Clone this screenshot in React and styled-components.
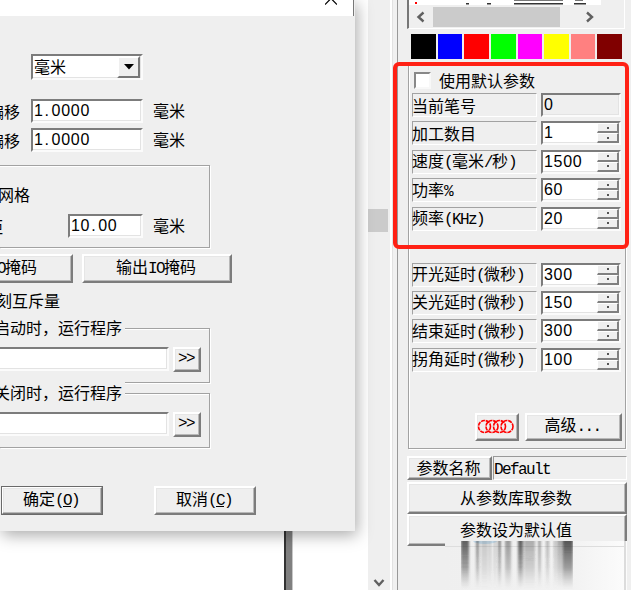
import React from "react";
import styled, { createGlobalStyle } from "styled-components";

const GlobalStyle = createGlobalStyle`
  * { box-sizing: border-box; }
  body {
    margin: 0;
    overflow: hidden;
    background: #fff;
    color: #000;
    font: 16px/16px "Noto Sans CJK SC", sans-serif;
  }
`;

const Screen = styled.div`
  position: relative;
  display: flex;
  width: 631px;
  height: 590px;
  overflow: hidden;
  white-space: nowrap;
`;

/* text pieces */
const Latin = styled.span`
  font-family: "Liberation Mono", monospace;
  font-size: 16px;
  letter-spacing: -1.6px;
`;

const Digits = styled.span`
  font-family: "Liberation Sans Narrow", "Liberation Sans", sans-serif;
  font-size: 16px;
  letter-spacing: 0.7px;
`;

const Dot = styled.span`
  display: inline-block;
  width: 8px;
  padding-left: 1px;
`;

const Text = ({ children }) =>
  children.split(/([\x20-\x7e]+)/).map((part, i) => (i % 2 ? <Latin key={i}>{part}</Latin> : part));

const Value = ({ children }) => (
  <Digits>
    {children.split(/(\.)/).map((part, i) => (part === "." ? <Dot key={i}>.</Dot> : part))}
  </Digits>
);

/* shared win32 parts */
const Field = styled.div`
  display: flex;
  align-items: center;
  flex: none;
  width: ${(p) => p.$w}px;
  height: ${(p) => p.$h || 24}px;
  padding-left: 1px;
  padding-bottom: ${(p) => p.$lift || 0}px;
  background: ${(p) => (p.$off ? "#efefef" : "#fff")};
  border: 2px solid;
  border-color: #7c7c7c #fbfbfb #fbfbfb #7c7c7c;
  border-left-width: ${(p) => (p.$open ? 0 : 2)}px;
  box-shadow: inset -1px -1px #e3e3e3;
`;

const Button = styled.div`
  display: flex;
  align-items: center;
  justify-content: center;
  flex: none;
  width: ${(p) => p.$w}px;
  height: ${(p) => p.$h || 29}px;
  padding: 0 2px 2px 0;
  background: #efefef;
  border: 2px solid;
  border-color: #fff #7c7c7c #7c7c7c #fff;
  box-shadow: inset -1px -1px #b8b8b8, inset 1px 1px #e6e6e6;
  outline: ${(p) => (p.$main ? "1px solid #6a6a6a" : "none")};
  outline-offset: -1px;
`;

/* drawing area behind the dialog */
const Canvas = styled.div`
  display: flex;
  align-items: flex-end;
  width: 368px;
  padding-left: 284px;
`;

const PageEdge = styled.div`
  width: 9px;
  height: 70px;
  background: #808080;
  border-left: 2px solid #333;
  border-right: 1px solid #c8c8c8;
`;

const Track = styled.div`
  display: flex;
  flex-direction: column;
  justify-content: space-between;
  align-items: center;
  width: 22px;
  padding: 209px 0 2px;
  background: #efefef;
`;

const Thumb = styled.div`
  width: 20px;
  height: 23px;
  margin-right: 2px;
  background: #cbcbcb;
`;

const Divider = styled.div`
  width: 8px;
  background: #f1f1f1;
  border-left: 2px solid #fff;
  border-right: 1px solid #999;
  box-shadow: inset 1px 0 #e2e2e2;
`;

/* dialog */
const Dialog = styled.div`
  position: absolute;
  left: 0;
  top: 0;
  width: 355px;
  height: 531px;
  background: #efefef;
  box-shadow: 2px 4px 15px rgba(0, 0, 0, 0.34);
  clip-path: inset(0 -35px -40px 0);
`;

const TitleBar = styled.div`
  height: 16px;
  width: 354px;
  padding-left: 325px;
  background: #fff;
  border-right: 1px solid #777;
  svg { display: block; }
`;

const Line = styled.div`
  display: flex;
  align-items: center;
  height: ${(p) => p.$h || 24}px;
  margin-top: ${(p) => p.$mt || 0}px;
  padding-left: ${(p) => p.$pl || 0}px;
`;

const Cut = styled.div`
  display: flex;
  flex: none;
  justify-content: flex-end;
  width: ${(p) => p.$w}px;
  margin-right: ${(p) => p.$gap || 0}px;
  padding-bottom: ${(p) => p.$lift || 0}px;
  overflow: hidden;
  line-height: 22px;
`;

const Unit = styled.span`
  margin-left: 10px;
  padding-bottom: 2px;
`;

const DropButton = styled.div`
  display: flex;
  align-items: center;
  justify-content: center;
  width: 23px;
  height: 22px;
  margin: 0 1px -2px auto;
  background: #efefef;
  border: 2px solid;
  border-color: #fff #777 #777 #fff;
`;

const Group = styled.div`
  width: 210px;
  height: ${(p) => p.$h}px;
  margin-top: ${(p) => p.$mt}px;
  border: 1px solid #a2a2a2;
  border-left: 0;
  box-shadow: 1px 1px #fff, inset 0 1px #fff;
`;

const Legend = styled.div`
  display: flex;
  justify-content: flex-end;
  width: 125px;
  height: 20px;
  margin-top: -12px;
  padding-right: 3px;
  line-height: 20px;
  overflow: hidden;
  background: #efefef;
`;

const PathRow = styled.div`
  display: flex;
  gap: 4px;
  margin-top: 10px;
`;

const Actions = styled.div`
  display: flex;
  gap: 51px;
  margin-top: 38px;
  padding-left: 1px;
`;

/* parameter panel */
const Panel = styled.div`
  flex: 1;
  padding-left: 9px;
  background: #efefef;
`;

const ListBottom = styled.div`
  display: flex;
  flex-direction: column;
  width: 218px;
  height: 29px;
  background: #efefef;
  border-left: 2px solid #777;
  border-bottom: 1px solid #fff;
  border-right: 1px solid #fff;
  svg { display: block; flex: none; }
`;

const HScroll = styled.div`
  display: flex;
  align-items: center;
  height: 21px;
  padding-left: 7px;
`;

const HThumb = styled.div`
  width: 127px;
  height: 20px;
  margin: 0 25px 0 7px;
  background: #cbcbcb;
`;

const Palette = styled.div`
  display: flex;
  gap: 2px;
  width: 211px;
  margin: 5px 0 6px 4px;
`;

const Swatch = styled.div`
  flex: 1;
  height: 25px;
  background: ${(p) => p.$c};
`;

const PenGroup = styled.div`
  width: 218px;
  height: 384px;
  margin-left: 1px;
  padding-left: 3px;
  border: 1px solid #a2a2a2;
  border-top-color: #e0e0e0;
  box-shadow: inset 1px 0 #fff, 1px 1px #fff;
`;

const CheckRow = styled.div`
  display: flex;
  align-items: center;
  height: 27px;
  padding: 1px 0 0 2px;
  gap: 8px;
`;

const Check = styled.div`
  width: 17px;
  height: 17px;
  background: #fff;
  border: 2px solid;
  border-color: #888 #f8f8f8 #f8f8f8 #888;
`;

const Params = styled.div`
  display: flex;
  flex-direction: column;
  gap: 4.4px;
  margin-top: ${(p) => p.$mt || 0}px;
`;

const ParamRow = styled.div`
  display: flex;
  gap: 4px;
  height: 24px;
`;

const ParamName = styled.div`
  display: flex;
  align-items: center;
  width: 125px;
  border: 1px solid;
  border-color: #a2a2a2 #fff #fff #a2a2a2;
  text-indent: -1px;
`;

const Spin = styled.div`
  display: flex;
  flex-direction: column;
  width: 22px;
  height: 20px;
  margin-left: auto;
`;

const SpinHalf = styled.div`
  display: flex;
  align-items: center;
  justify-content: center;
  height: 10px;
  background: #efefef;
  border: solid;
  border-width: 1px 2px 2px 1px;
  border-color: #fff #808080 #808080 #fff;

  &::after {
    content: "";
    width: 2px;
    height: 2px;
    background: #555;
  }
`;

const ToolRow = styled.div`
  display: flex;
  gap: 6px;
  margin: 41px 0 0 63px;
`;

const NameRow = styled.div`
  display: flex;
  margin-top: 7px;
  gap: 1px;
`;

const PresetName = styled.div`
  flex: none;
  width: 134px;
  height: 24px;
  line-height: 21px;
  border: 1px solid;
  border-color: #999 #fff #fff #999;
`;

const Marker = styled.div`
  position: absolute;
  left: 393px;
  top: 62px;
  width: 236px;
  height: 187px;
  border: 4px solid #ff2115;
  border-radius: 6px;
`;

const Smear = styled.svg`
  position: absolute;
  left: 445px;
  top: 541px;
`;

const Chevron = ({ d, w, h }) => (
  <svg width={w} height={h} fill="none" stroke="#606060" strokeWidth="2.4">
    <path d={d} />
  </svg>
);

const colors = ["#000", "#00f", "#f00", "#0f0", "#f0f", "#ff0", "#ff8080", "#800000"];

const penParams = [
  ["当前笔号", "0", true],
  ["加工数目", "1"],
  ["速度(毫米/秒)", "1500"],
  ["功率%", "60"],
  ["频率(KHz)", "20"],
];

const delayParams = [
  ["开光延时(微秒)", "300"],
  ["关光延时(微秒)", "150"],
  ["结束延时(微秒)", "300"],
  ["拐角延时(微秒)", "100"],
];

// [x, width, opacity]
const stripes = [
  [16, 8, 0.7], [31, 3, 0.5], [36, 7, 0.2], [44, 2, 0.25], [49, 2, 0.25], [53, 3, 0.5],
  [60, 6, 0.42], [73, 5, 0.7], [79, 11, 0.32], [93, 3, 0.38], [101, 3, 0.3], [109, 2, 0.3],
  [112, 6, 0.35], [118, 10, 0.75],
];

const ParamList = ({ items, mt }) => (
  <Params $mt={mt}>
    {items.map(([name, value, readOnly]) => (
      <ParamRow key={name}>
        <ParamName><div><Text>{name}</Text></div></ParamName>
        <Field $w={80} $off={readOnly}>
          <Value>{value}</Value>
          {!readOnly && <Spin><SpinHalf /><SpinHalf /></Spin>}
        </Field>
      </ParamRow>
    ))}
  </Params>
);

const RunGroup = ({ title, mt }) => (
  <Group $h={55} $mt={mt}>
    <Legend>{title}</Legend>
    <PathRow>
      <Field $w={169} $open />
      <Button $w={28} $h={25}><Latin>&gt;&gt;</Latin></Button>
    </PathRow>
  </Group>
);

const SettingsDialog = () => (
  <Dialog>
    <TitleBar>
      <svg width="12" height="5" fill="none" stroke="#000" strokeWidth="1.2">
        <path d="M0 4.5 6-1.5 12 4.5" />
      </svg>
    </TitleBar>
    <Line $mt={38} $h={26} $pl={31}>
      <Field $w={112} $h={26} $lift={2}>
        毫米
        <DropButton>
          <svg width="10" height="6"><path d="M0 0H10L5 5.5Z" /></svg>
        </DropButton>
      </Field>
    </Line>
    <Line $mt={19}>
      <Cut $w={20} $gap={11} $lift={1}>偏移</Cut>
      <Field $w={112} $lift={1}><Value>1.0000</Value></Field>
      <Unit>毫米</Unit>
    </Line>
    <Line $mt={5}>
      <Cut $w={20} $gap={11} $lift={1}>偏移</Cut>
      <Field $w={112} $lift={1}><Value>1.0000</Value></Field>
      <Unit>毫米</Unit>
    </Line>
    <Group $h={83} $mt={13}>
      <Line $mt={17}><Cut $w={30} $lift={2}>网格</Cut></Line>
      <Line $mt={7}>
        <Cut $w={3} $gap={65} $lift={1}>间距</Cut>
        <Field $w={75} $lift={1}><Value>10.00</Value></Field>
        <Unit>毫米</Unit>
      </Line>
    </Group>
    <Line $mt={6} $h={29}>
      <Cut $w={73} $gap={9}>
        <Button $w={150}><div><Text>输入IO掩码</Text></div></Button>
      </Cut>
      <Button $w={150}><div><Text>输出IO掩码</Text></div></Button>
    </Line>
    <Line $mt={6}><Cut $w={60} $lift={2}>标刻互斥量</Cut></Line>
    <RunGroup title="启动时，运行程序" mt={15} />
    <RunGroup title="关闭时，运行程序" mt={10} />
    <Actions>
      <Button $w={102} $main>
        <div>确定<Latin>(<u>O</u>)</Latin></div>
      </Button>
      <Button $w={102}>
        <div>取消<Latin>(<u>C</u>)</Latin></div>
      </Button>
    </Actions>
  </Dialog>
);

const App = () => (
  <Screen>
    <GlobalStyle />
    <Canvas><PageEdge /></Canvas>
    <Track>
      <Thumb />
      <Chevron w={12} h={10} d="M1.5 2 6 7 10.5 2" />
    </Track>
    <Divider />
    <Panel>
      <ListBottom>
        <svg width="215" height="6">
          <path fill="#fff" d="M0 0H192V5H0Z" />
          <path fill="#f00" d="M6 2h2v2H6Z" />
          <path fill="#333" d="M57 3h3v1.5h-3ZM78 3h4v1.5h-4ZM105 3h49v1.5h-49ZM165 3h12v1.5h-12Z" />
          <path fill="#777" d="M105 0h49v1h-49ZM166 0h8v1h-8Z" />
        </svg>
        <HScroll>
          <Chevron w={10} h={12} d="M7.5 1.5 2.5 6 7.5 10.5" />
          <HThumb />
          <Chevron w={10} h={12} d="M2 1.5 7 6 2 10.5" />
        </HScroll>
      </ListBottom>
      <Palette>
        {colors.map((c) => <Swatch key={c} $c={c} />)}
      </Palette>
      <PenGroup>
        <CheckRow><Check />使用默认参数</CheckRow>
        <ParamList items={penParams} />
        <ParamList items={delayParams} mt={32} />
        <ToolRow>
          <Button $w={44} $h={28}>
            <svg width="38" height="16" fill="none" stroke="#f00" strokeWidth="1.6" strokeDasharray="4 0.8">
              {[7.5, 15, 22.5, 30].map((cx) => <circle key={cx} cx={cx} cy="8.5" r="6" />)}
            </svg>
          </Button>
          <Button $w={97} $h={28}><div><Text>高级...</Text></div></Button>
        </ToolRow>
      </PenGroup>
      <NameRow>
        <Button $w={85} $h={24}>参数名称</Button>
        <PresetName><Latin>Default</Latin></PresetName>
      </NameRow>
      <Line $mt={2} $h={32}><Button $w={220} $h={32}>从参数库取参数</Button></Line>
      <Line $h={32}><Button $w={220} $h={32}>参数设为默认值</Button></Line>
    </Panel>
    <SettingsDialog />
    <Marker />
    <Smear width="186" height="49">
      <defs>
        <linearGradient id="base">
          <stop offset="0" stopColor="#efefef" />
          <stop offset="0.7" stopColor="#f2f2f2" />
          <stop offset="1" stopColor="#fcfcfc" />
        </linearGradient>
        <linearGradient id="fade" x2="0" y2="1">
          <stop offset="0" stopColor="#222" />
          <stop offset="0.55" stopColor="#333" stopOpacity="0.6" />
          <stop offset="1" stopColor="#777" stopOpacity="0" />
        </linearGradient>
        <filter id="soft" x="0" y="0" width="1" height="1">
          <feGaussianBlur stdDeviation="0.8 0" />
        </filter>
      </defs>
      <rect width="182" height="49" fill="url(#base)" />
      <rect y="5" width="180" height="1" fill="#ddd" />
      <ellipse cx="40" cy="0" rx="12" ry="3" fill="#c9dfee" />
      <g filter="url(#soft)">
        {stripes.map(([x, w, o]) => (
          <rect key={x} x={x} width={w} height="48" fill="url(#fade)" opacity={o} />
        ))}
      </g>
      <rect x="179" width="2" height="49" fill="#dcdcdc" />
    </Smear>
  </Screen>
);

export default App;
